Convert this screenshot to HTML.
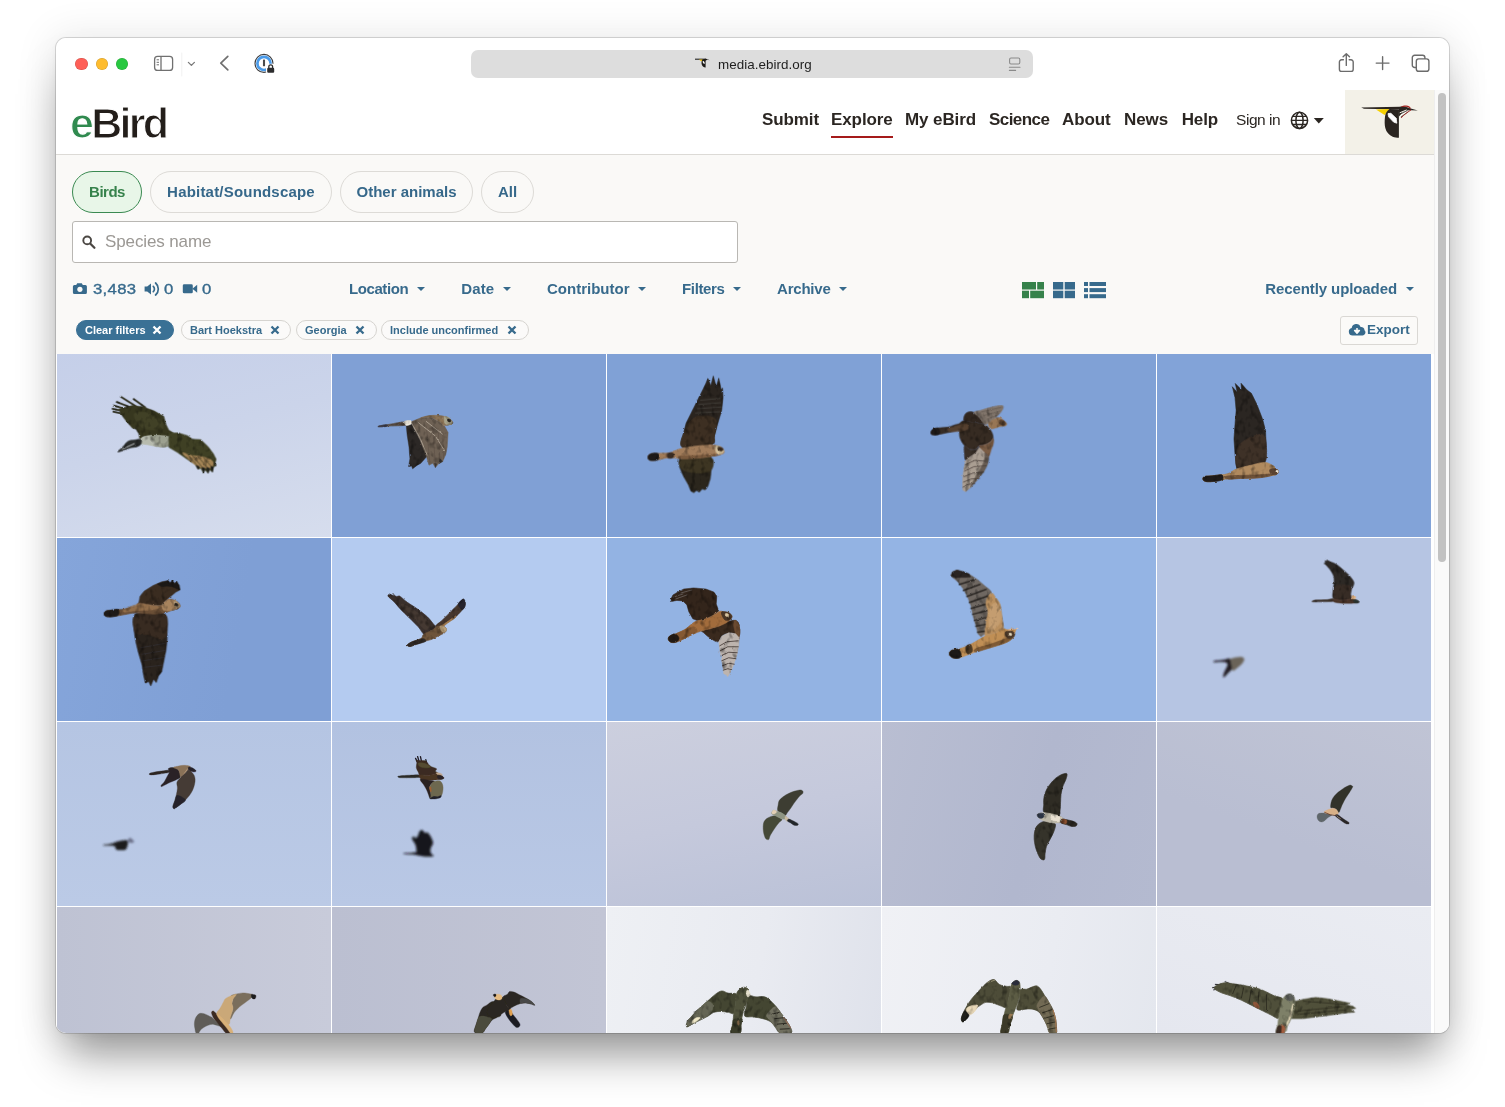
<!DOCTYPE html>
<html lang="en">
<head>
<meta charset="utf-8">
<title>Media Search - eBird</title>
<style>
*{box-sizing:border-box;margin:0;padding:0}
html,body{width:1505px;height:1107px;overflow:hidden;background:#fff}
body{font-family:"Liberation Sans",sans-serif;position:relative;color:#2b2622}
.win{position:absolute;left:56px;top:38px;width:1393px;height:995px;border-radius:10px;overflow:hidden;background:#fff;z-index:2}
.shadow{position:absolute;left:56px;top:38px;width:1393px;height:995px;border-radius:10px;z-index:1;
 box-shadow:0 0 0 1px rgba(0,0,0,.14),0 31px 42px -10px rgba(0,0,0,.40),0 0 38px 6px rgba(0,0,0,.075),0 2px 7px rgba(0,0,0,.035)}
.o{position:absolute;left:-56px;top:-38px;width:1505px;height:1107px}
.a{position:absolute}
.t{position:absolute;white-space:nowrap;line-height:1}
.o{will-change:transform;backface-visibility:hidden}
/* toolbar */
.tl{position:absolute;top:57.600px;width:12.600px;height:12.600px;border-radius:50%}
.url{position:absolute;left:471px;top:50px;width:562px;height:28px;border-radius:7px;background:#dddddd}
/* page */
.page{position:absolute;left:56px;top:90px;width:1378px;height:943px;background:#faf9f7}
.hdr{position:absolute;left:56px;top:90px;width:1378px;height:65px;background:#fff;border-bottom:1px solid #dcdad6}
.nav{font-weight:bold;font-size:17px;color:#2b2622;top:111px;letter-spacing:-.1px}
.pill{position:absolute;top:171px;height:42px;border-radius:21px;border:1px solid #dddbd7;background:#faf9f7;color:#36688a;font-weight:bold;font-size:15px;line-height:40px;text-align:center;white-space:nowrap}
.blue{color:#376a8c}
.dd{font-weight:bold;font-size:15px;color:#376a8c;top:281px}
.car{position:absolute;width:0;height:0;border-left:4.2px solid transparent;border-right:4.2px solid transparent;border-top:4.8px solid #376a8c;top:286.5px}
.chip{position:absolute;top:320px;height:20px;border-radius:10px;border:1px solid #d6d4d0;background:#fbfaf9;color:#376a8c;font-weight:bold;font-size:11px;line-height:18px;white-space:nowrap;padding-left:8px}
.chip svg{position:absolute;top:4.3px}
.cell{position:absolute;width:274px;overflow:hidden}
.cell svg{position:absolute;left:0;top:0;width:274px;height:184.05px;display:block}
</style>
</head>
<body>
<div class="shadow"></div>
<div class="win"><div class="o">

<!-- ===== Safari toolbar ===== -->
<div class="tl" style="left:75.400px;background:#fe5f57;box-shadow:inset 0 0 0 .5px rgba(0,0,0,.18)"></div>
<div class="tl" style="left:95.500px;background:#febc2e;box-shadow:inset 0 0 0 .5px rgba(0,0,0,.18)"></div>
<div class="tl" style="left:115.600px;background:#28c840;box-shadow:inset 0 0 0 .5px rgba(0,0,0,.18)"></div>
<svg class="a" style="left:150px;top:48px" width="140" height="32" viewBox="150 48 140 32" fill="none" stroke="#707070" stroke-width="1.3" stroke-linecap="round" stroke-linejoin="round">
 <rect x="154.6" y="56.4" width="18" height="14" rx="3"/>
 <path d="M161 56.6V70.2"/>
 <path d="M157 59.8h1.6M157 62.3h1.6M157 64.8h1.6" stroke-width="1"/>
 <path d="M181.8 53V76" stroke="#f1f1f1" stroke-width="1"/>
 <path d="M188.4 62.4l3 3 3-3" stroke="#7a7a7a" stroke-width="1.3"/>
 <path d="M227.8 56.4l-7 6.7 7 6.7" stroke-width="1.7"/>
 <circle cx="264" cy="63.4" r="9" stroke="#3c3c3e" stroke-width="1.1" fill="#fff"/>
 <circle cx="264" cy="63.4" r="6.6" stroke="#4a9bea" stroke-width="2.7"/>
 <path d="M264 59.6v6.6" stroke="#4a4a4c" stroke-width="2.1" stroke-linecap="butt"/>
 <rect x="266" y="63.8" width="9.5" height="10" rx="2" fill="#fff" stroke="none"/>
 <rect x="267.2" y="67.8" width="7" height="5" rx="1.1" fill="#2c2c2e" stroke="none"/>
 <path d="M268.8 68v-1.3a1.9 1.9 0 0 1 3.8 0V68" stroke="#2c2c2e" stroke-width="1.3"/>
</svg>
<div class="url"></div>
<svg class="a" style="left:694px;top:56px" width="18" height="16" viewBox="0 0 18 16">
 <path d="M1 3.2h11.2" stroke="#222" stroke-width="1.1"/>
 <path d="M5 3.6h3.6l-1.2 1.8z" fill="#f4c400"/>
 <path d="M8.6 3.4c-1.4 1.6-1.6 5.2.4 7 .9.8 2 1 2.6 1V4.8l1.6-1 2.6.4-2.4-.9c-.8-.7-2.6-.9-4.8.1z" fill="#1d1a17"/>
 <ellipse cx="9.7" cy="6.4" rx=".8" ry="1.6" transform="rotate(-28 9.7 6.4)" fill="#fff"/>
</svg>
<div class="t" style="left:718px;top:57.600px;font-size:13.4px;color:#1f1f1f;letter-spacing:.05px">media.ebird.org</div>
<svg class="a" style="left:1006px;top:55px" width="18" height="18" viewBox="1006 55 18 18" fill="none" stroke="#8a8a8a" stroke-width="1.1" stroke-linecap="round">
 <rect x="1009.6" y="58" width="10.2" height="6" rx="1.4"/>
 <path d="M1009.4 67.2h10.6M1009.4 70.4h6.2"/>
</svg>
<svg class="a" style="left:1330px;top:48px" width="110" height="30" viewBox="1330 48 110 30" fill="none" stroke="#6b6b6b" stroke-width="1.4" stroke-linecap="round" stroke-linejoin="round">
 <path d="M1343.4 59.8h-1.8a2.2 2.2 0 0 0-2.2 2.2v7.2a2.2 2.2 0 0 0 2.2 2.2h9.4a2.2 2.2 0 0 0 2.2-2.2V62a2.2 2.2 0 0 0-2.2-2.2h-1.8"/>
 <path d="M1346.3 65.4V54M1343.1 56.8l3.2-3.1 3.2 3.1"/>
 <path d="M1376.2 63.1h12.8M1382.6 56.7v12.8"/>
 <path d="M1415.6 67.5h-1a2.3 2.3 0 0 1-2.3-2.3v-7.6a2.3 2.3 0 0 1 2.3-2.3h8a2.3 2.3 0 0 1 2.3 2.3v.8"/>
 <rect x="1416.3" y="58.9" width="12.6" height="12.4" rx="2.4" fill="#fff"/>
</svg>

<!-- ===== page ===== -->
<div class="page"></div>
<div class="hdr"></div>

<!-- eBird logo -->
<div class="t" style="left:70px;top:102px;font-size:43px;font-weight:bold;letter-spacing:-2.7px;color:#231e1a;-webkit-text-stroke:1.1px #fff"><span style="color:#308a4f">e</span>Bird</div>

<!-- nav -->
<div class="t nav" style="left:762px">Submit</div>
<div class="t nav" style="left:831px">Explore</div>
<div class="a" style="left:831px;top:136px;width:62px;height:2px;background:#a51a1a"></div>
<div class="t nav" style="left:905px">My eBird</div>
<div class="t nav" style="left:989px;letter-spacing:-.55px">Science</div>
<div class="t nav" style="left:1062px">About</div>
<div class="t nav" style="left:1124px">News</div>
<div class="t nav" style="left:1181.7px">Help</div>
<div class="t" style="left:1236px;top:112px;font-size:15.5px;letter-spacing:-.45px;color:#2b2622">Sign in</div>
<svg class="a" style="left:1289px;top:110px" width="38" height="22" viewBox="1289 110 38 22" fill="none" stroke="#2b2622" stroke-width="1.5">
 <circle cx="1299.5" cy="120.4" r="8.1"/>
 <ellipse cx="1299.5" cy="120.4" rx="3.6" ry="8.1"/>
 <path d="M1291.4 120.4h16.2M1292.6 116.3h13.8M1292.6 124.5h13.8" stroke-width="1.3"/>
 <path d="M1313.8 117.9h10l-5 5.6z" fill="#2b2622" stroke="none"/>
</svg>

<!-- Cornell Lab logo -->
<div class="a" style="left:1345px;top:90px;width:89px;height:64px;background:#f3f1e8"></div>
<svg class="a" style="left:1355px;top:98px" width="70" height="46" viewBox="1355 98 70 46">
 <path d="M1361.200 107.400L1400 106.800 1404 106.200 1404 108.600 1400 109.100 1389.300 109.300 1364 108.700z" fill="#2a2520"/>
 <path d="M1376 109.400l13.600-.5-5 6z" fill="#f5d000"/>
 <path d="M1389.600 108.900c-2.700 1.600-4.200 4.300-4.600 7.800-.5 3.900-.5 8 .3 11.400 1 4.300 3.800 7.100 7.400 8.600 2 .8 4.200 1.100 6.200 1.100V110l.1-3.100 6-.3 5.800 1.800 7 2-6.800-.2-4.500.4-4 1.700-3.500 4.200L1398.900 109.200z" fill="#2a2520"/>
 <path d="M1400.800 107c1.500-1 3.500-1.500 5.400-1.400 2.200.1 3.900 1.200 4.900 2.800l-1.300.1c-.9-1-2.200-1.600-3.700-1.700z" fill="#a32420"/>
 <path d="M1399.700 112.800l7-2.900M1400.500 115.700l7.200-4.300" stroke="#fbf9f2" stroke-width="1" fill="none"/>
 <path d="M1400.100 114.200l7-3.500M1400.900 116.900l7.600-5.200" stroke="#2a2520" stroke-width=".7" fill="none"/>
 <path d="M1401.100 118c2.600-3 6-5.800 10.100-8.100" stroke="#a32420" stroke-width=".9" fill="none"/>
 <path d="M1388 113.600l2.900-.3 5.300 5 .600 4.900-3.200-1.100-5-5.300z" fill="#fff" stroke="#fff" stroke-width=".8" stroke-linejoin="round"/>
</svg>

<!-- pills -->
<div class="pill" style="left:72px;width:70px;background:#e8f6e8;border-color:#3b8a52;color:#36824b;letter-spacing:-.5px">Birds</div>
<div class="pill" style="left:150px;width:182px;letter-spacing:.2px">Habitat/Soundscape</div>
<div class="pill" style="left:340px;width:133px">Other animals</div>
<div class="pill" style="left:481px;width:53px">All</div>

<!-- search -->
<div class="a" style="left:72px;top:221px;width:665.5px;height:42px;background:#fff;border:1px solid #b9b7b3;border-radius:3px"></div>
<svg class="a" style="left:81px;top:234px" width="16" height="16" viewBox="0 0 16 16" fill="none" stroke="#4b4743" stroke-linecap="round">
 <circle cx="6.200" cy="6.400" r="3.900" stroke-width="1.900"/>
 <path d="M9.400 9.800l4 4" stroke-width="2.300"/>
</svg>
<div class="t" style="left:105px;top:233px;font-size:17px;color:#9b9894;letter-spacing:-.12px">Species name</div>

<!-- stats -->
<svg class="a" style="left:72px;top:282px" width="16" height="13" viewBox="0 0 16 13"><path d="M5.200 1.300h4.600l1 1.600h2.600a1.500 1.500 0 0 1 1.500 1.500v6a1.500 1.500 0 0 1-1.500 1.500H2.400A1.500 1.500 0 0 1 .9 10.400v-6a1.500 1.500 0 0 1 1.500-1.500h1.800z" fill="#376a8c"/><circle cx="7.900" cy="7.300" r="2.600" fill="#faf9f7"/></svg>
<div class="t blue" style="left:93px;top:281.800px;font-size:14.5px;letter-spacing:.3px;-webkit-text-stroke:.35px #376a8c;transform:scaleX(1.15);transform-origin:0 0">3,483</div>
<svg class="a" style="left:144px;top:281px" width="17" height="15" viewBox="0 0 17 15" fill="none" stroke="#376a8c" stroke-linecap="round"><path d="M.6 5.600h2.600L7 2.400v11.200L3.200 10.400H.6z" fill="#376a8c" stroke="none"/><path d="M9.300 5.300a3.800 3.800 0 0 1 0 5.400" stroke-width="1.700"/><path d="M11.600 2a8 8 0 0 1 0 12" stroke-width="1.700"/></svg>
<div class="t blue" style="left:163.800px;top:281.800px;font-size:14.5px;-webkit-text-stroke:.35px #376a8c;transform:scaleX(1.15);transform-origin:0 0">0</div>
<svg class="a" style="left:182px;top:283px" width="16" height="12" viewBox="0 0 16 12"><rect x=".8" y="1.300" width="10" height="9" rx="1.400" fill="#376a8c"/><path d="M10.400 5.800l4.800-4v8z" fill="#376a8c"/></svg>
<div class="t blue" style="left:201.800px;top:281.800px;font-size:14.5px;-webkit-text-stroke:.35px #376a8c;transform:scaleX(1.15);transform-origin:0 0">0</div>

<!-- dropdowns -->
<div class="t dd" style="left:349px;letter-spacing:-.42px">Location</div><div class="car" style="left:416.6px"></div>
<div class="t dd" style="left:461.3px;letter-spacing:.1px">Date</div><div class="car" style="left:503px"></div>
<div class="t dd" style="left:547px">Contributor</div><div class="car" style="left:637.8px"></div>
<div class="t dd" style="left:682px;letter-spacing:-.35px">Filters</div><div class="car" style="left:733px"></div>
<div class="t dd" style="left:777px;letter-spacing:-.2px">Archive</div><div class="car" style="left:839.2px"></div>
<div class="t dd" style="left:1265.3px;letter-spacing:-.1px">Recently uploaded</div><div class="car" style="left:1406px"></div>

<!-- view toggles -->
<svg class="a" style="left:1022px;top:282px" width="86" height="17" viewBox="0 0 86 17">
 <g fill="#36824b"><rect x="0" y="0" width="14" height="7.500"/><rect x="15.200" y="0" width="6.800" height="7.500"/><rect x="0" y="8.700" width="7" height="7.500"/><rect x="8.200" y="8.700" width="13.800" height="7.500"/></g>
 <g fill="#376a8c"><rect x="31" y="0" width="10.300" height="7.500"/><rect x="42.700" y="0" width="10.300" height="7.500"/><rect x="31" y="8.700" width="10.300" height="7.500"/><rect x="42.700" y="8.700" width="10.300" height="7.500"/>
 <rect x="62" y="0" width="4" height="4"/><rect x="67.500" y="0" width="16.500" height="4"/><rect x="62" y="6.100" width="4" height="4"/><rect x="67.500" y="6.100" width="16.500" height="4"/><rect x="62" y="12.200" width="4" height="4"/><rect x="67.500" y="12.200" width="16.500" height="4"/></g>
</svg>

<!-- chips -->
<div class="chip" style="left:76px;width:98px;background:#3a7195;border-color:#3a7195;color:#fff;padding-left:8px">Clear filters<svg style="left:75px" width="10" height="10" viewBox="0 0 10 10"><path d="M1.500 1.500l7 7M8.500 1.500l-7 7" stroke="#fff" stroke-width="2.300"/></svg></div>
<div class="chip" style="left:181px;width:110px">Bart Hoekstra<svg style="left:88px" width="10" height="10" viewBox="0 0 10 10"><path d="M1.500 1.500l7 7M8.500 1.500l-7 7" stroke="#376a8c" stroke-width="2.300"/></svg></div>
<div class="chip" style="left:296px;width:81px">Georgia<svg style="left:58px" width="10" height="10" viewBox="0 0 10 10"><path d="M1.500 1.500l7 7M8.500 1.500l-7 7" stroke="#376a8c" stroke-width="2.300"/></svg></div>
<div class="chip" style="left:381px;width:148px">Include unconfirmed<svg style="left:125px" width="10" height="10" viewBox="0 0 10 10"><path d="M1.500 1.500l7 7M8.500 1.500l-7 7" stroke="#376a8c" stroke-width="2.300"/></svg></div>

<!-- export -->
<div class="a" style="left:1340px;top:316px;width:78px;height:29px;border:1px solid #dad8d4;border-radius:3px;background:#fbfaf8"></div>
<svg class="a" style="left:1348px;top:323px" width="18" height="14" viewBox="0 0 18 14"><path d="M4.600 12.400a3.700 3.700 0 0 1-.9-7.300A4.600 4.600 0 0 1 12.600 4a3.300 3.300 0 0 1 3.900 3.300 3 3 0 0 1-2.600 5.100z" fill="#376a8c"/><path d="M9 5v4.200M6.600 7.600L9 10.200l2.400-2.600z" stroke="#fbfaf8" stroke-width="1.500" fill="#fbfaf8" stroke-linejoin="round"/></svg>
<div class="t blue" style="left:1367px;top:323px;font-size:13.5px;font-weight:bold">Export</div>

<!-- ===== grid ===== -->
<div class="a" style="left:56px;top:354px;width:1378px;height:680px;background:#fff"></div>
<svg width="0" height="0" style="position:absolute"><defs><filter id="b1" x="-10%" y="-10%" width="120%" height="120%" color-interpolation-filters="sRGB"><feTurbulence type="fractalNoise" baseFrequency="0.05" numOctaves="2" seed="4" result="n"/><feDisplacementMap in="SourceGraphic" in2="n" scale="11" xChannelSelector="R" yChannelSelector="G" result="d"/><feTurbulence type="fractalNoise" baseFrequency="0.035 0.025" numOctaves="2" seed="9" result="m"/><feColorMatrix in="m" type="matrix" values="0 0 0 0 0  0 0 0 0 0  0 0 0 0 0  0 0 0 -1.1 0.56" result="ma"/><feComposite in="ma" in2="d" operator="in" result="sp"/><feMerge result="mm"><feMergeNode in="d"/><feMergeNode in="sp"/></feMerge><feGaussianBlur in="mm" stdDeviation="2"/></filter><filter id="b2" x="-20%" y="-20%" width="140%" height="140%"><feGaussianBlur stdDeviation="2.6"/></filter><filter id="b3" x="-30%" y="-30%" width="160%" height="160%"><feGaussianBlur stdDeviation="6"/></filter></defs></svg>
<div class="cell" style="left:57px;top:354px;height:183px;background:linear-gradient(165deg,#c5cfe9 0%,#cbd4ea 45%,#d6dded 100%)"><svg viewBox="0 0 1505 1011" preserveAspectRatio="none"><g stroke-linejoin="round"><g filter="url(#b1)"><g transform="translate(214.2,197.7) scale(0.5000)"><path fill="none" stroke="#2f2f1f" stroke-width="20" stroke-linecap="round" d="M470,200L275,75M540,190L415,100M430,210L228,132M400,230L192,170M380,250L182,206M360,275L192,238" /><path fill="#37371f" stroke="#37371f" stroke-width="5" d="M250,210L400,170L520,185L640,230L745,290L770,380L800,440L850,470L780,520L640,500L520,510L480,540L470,480L440,430L400,420L330,340L280,270Z" /><path fill="#46462a" stroke="#46462a" stroke-width="7" d="M420,260C438,243 513,240 560,250C607,260 670,292 700,320C730,348 750,400 740,420C730,440 677,440 640,440C603,440 552,435 520,420C488,405 467,377 450,350C433,323 402,277 420,260Z" opacity=".7"/><path fill="#b7bbae" stroke="#b7bbae" stroke-width="7" d="M480,545C492,531 523,512 560,505C597,498 660,498 700,500C740,502 783,502 800,520C817,538 817,592 800,610C783,628 740,627 700,625C660,623 595,606 560,600C525,594 503,599 490,590C477,581 468,559 480,545Z" /><path fill="#8b8f7c" stroke="#8b8f7c" stroke-width="7" d="M600,505C627,498 767,502 800,520C833,538 817,592 800,610C783,628 727,633 700,625C673,617 657,580 640,560C623,540 573,512 600,505Z" opacity=".6"/><path fill="#2b2d2c" stroke="#2b2d2c" stroke-width="7" d="M495,545C483,537 444,547 420,550C396,553 370,553 350,565C330,577 318,601 300,620C282,639 240,670 240,678C240,686 277,672 300,665C323,658 357,642 380,635C403,628 422,631 440,625C458,619 481,613 490,600C499,587 507,553 495,545Z" /><path fill="none" stroke="#c8cccc" stroke-width="10" stroke-linecap="round" d="M290,650L420,590" /><path fill="#3f4024" stroke="#3f4024" stroke-width="5" d="M800,470L900,470L1000,500L1060,540L1150,545L1230,620L1290,700L1320,760L1310,800L1320,830L1290,850L1280,900L1250,880L1230,915L1200,880L1180,910L1150,860L1120,870L1090,820L1000,760L900,690L800,630Z" /><path fill="#b58f5e" stroke="#b58f5e" stroke-width="7" d="M950,690C952,680 1017,713 1050,720C1083,727 1117,723 1150,730C1183,737 1227,748 1250,760C1273,772 1287,785 1290,800C1293,815 1285,840 1270,850C1255,860 1225,862 1200,860C1175,858 1147,853 1120,840C1093,827 1068,805 1040,780C1012,755 948,700 950,690Z" opacity=".85"/><path fill="none" stroke="#4a4428" stroke-width="8" stroke-linecap="round" d="M1000,700L1110,830M1060,720L1175,860M1120,730L1230,860M1180,740L1275,850" /><path fill="#1e1e1c" stroke="#1e1e1c" stroke-width="5" d="M1100,830L1135,840L1120,872ZM1165,850L1195,860L1180,912ZM1215,850L1245,860L1232,915ZM1260,840L1288,850L1280,902ZM1295,800L1320,815L1318,835Z" /></g></g></g></svg></div>
<div class="cell" style="left:332px;top:354px;height:183px;background:#80a0d5"><svg viewBox="0 0 1505 1011" preserveAspectRatio="none"><g stroke-linejoin="round"><g filter="url(#b1)"><g transform="translate(87.9,230.7) scale(0.5000)"><path fill="#2c2826" stroke="#2c2826" stroke-width="5" d="M640,330L700,310L790,480L850,600L870,660L800,740L760,760L710,800L700,770L665,775L680,690L670,560L650,430Z" /><path fill="#5a4d42" stroke="#5a4d42" stroke-width="7" d="M340,330C359,325 413,318 460,310C507,302 590,283 620,285C650,287 667,312 640,320C613,328 509,327 460,330C411,333 365,338 345,338C325,338 321,335 340,330Z" /><path fill="#3a3a48" stroke="#3a3a48" stroke-width="7" d="M340,330C352,326 406,315 420,316C434,317 438,330 425,334C412,338 359,339 345,338C331,337 328,334 340,330Z" /><path fill="#efe9dc" stroke="#efe9dc" stroke-width="7" d="M620,280C628,272 678,268 690,272C702,276 703,297 695,305C687,313 652,326 640,322C628,318 612,288 620,280Z" /><path fill="#6e6154" stroke="#6e6154" stroke-width="5" d="M700,280L800,240L900,230L1000,280L1060,330L1100,400L1090,560L1075,640L1040,720L1000,740L960,785L930,740L890,760L860,660L790,480L700,310Z" /><path fill="#8b7356" stroke="#8b7356" stroke-width="7" d="M800,240C800,237 867,219 900,215C933,211 970,212 1000,215C1030,218 1058,222 1080,230C1102,238 1118,248 1130,260C1142,272 1155,290 1150,300C1145,310 1117,317 1100,320C1083,323 1067,327 1050,320C1033,313 1025,295 1000,280C975,265 933,239 900,232C867,225 800,243 800,240Z" /><path fill="#a9a48c" stroke="#a9a48c" stroke-width="7" d="M1060,228C1068,218 1096,230 1110,240C1124,250 1146,278 1145,290C1144,302 1118,313 1105,315C1092,317 1072,314 1065,300C1058,286 1052,238 1060,228Z" /><path fill="#2a2622" stroke="#2a2622" stroke-width="7" d="M1095,255C1099,251 1120,254 1125,258C1130,262 1132,276 1128,280C1124,284 1106,284 1100,280C1094,276 1091,259 1095,255Z" /><path fill="none" stroke="#5a4e44" stroke-width="6" stroke-linecap="round" d="M860,330L900,740M930,340L960,760M990,360L1010,720M1040,400L1050,690" /><path fill="none" stroke="#c9bfae" stroke-width="7" stroke-linecap="round" d="M700,300L790,460L870,650M770,290L960,440L1060,600M860,280L1040,420" /><path fill="#3a3634" stroke="#3a3634" stroke-width="5" d="M1010,690L1040,720L1000,742ZM950,740L975,745L960,786Z" /></g></g></g></svg></div>
<div class="cell" style="left:607px;top:354px;height:183px;background:#80a1d6"><svg viewBox="0 0 1505 1011" preserveAspectRatio="none"><g stroke-linejoin="round"><g filter="url(#b1)"><g transform="translate(115.4,87.9) scale(0.6642)"><path fill="#2a241f" stroke="#2a241f" stroke-width="5" d="M450,640L455,540L480,440L540,320L600,200L640,120L660,70L685,130L705,50L730,140L750,68L770,160L782,150L785,230L775,330L740,450L715,540L690,620L560,630Z" /><path fill="#3d2f22" stroke="#3d2f22" stroke-width="7" d="M450,640C413,620 455,540 470,500C485,460 510,420 540,400C570,380 618,377 650,380C682,383 719,393 730,420C741,447 722,507 715,540C708,573 734,603 690,620C646,637 487,660 450,640Z" /><path fill="none" stroke="#55534f" stroke-width="9" stroke-linecap="round" d="M600,250L760,235M585,285L765,270M570,320L770,305M560,355L760,345" opacity=".55"/><path fill="#2b261d" stroke="#2b261d" stroke-width="5" d="M425,735L560,728L685,715L690,800L680,900L660,960L640,990L610,985L590,1010L565,995L545,1015L520,1000L500,950L460,880L425,800Z" /><path fill="#3d3522" stroke="#3d3522" stroke-width="7" d="M440,740C478,724 639,707 680,722C721,737 705,809 685,830C665,851 599,852 560,850C521,848 470,838 450,820C430,802 402,756 440,740Z" /><path fill="#a17c5a" stroke="#a17c5a" stroke-width="7" d="M440,650C475,641 518,635 560,630C602,625 662,621 690,620C718,619 716,622 730,625C744,628 764,631 775,640C786,649 798,670 795,680C792,690 778,695 760,700C742,705 723,707 690,712C657,717 603,725 560,728C517,731 468,730 430,730C392,730 363,722 330,725C297,728 255,742 230,745C205,748 191,749 180,745C169,741 164,728 165,720C166,712 169,700 185,695C201,690 232,692 260,690C288,688 320,692 350,685C380,678 405,659 440,650Z" /><path fill="#7a5a3e" stroke="#7a5a3e" stroke-width="7" d="M430,712C452,708 517,710 560,708C603,706 657,701 690,700C723,699 760,698 760,700C760,702 723,709 690,714C657,719 603,727 560,730C517,733 452,735 430,732C408,729 408,716 430,712Z" /><path fill="#3a2c22" stroke="#3a2c22" stroke-width="7" d="M330,690C337,684 365,682 372,688C379,694 379,718 372,724C365,730 337,732 330,726C323,720 323,696 330,690Z" /><path fill="#1e1a18" stroke="#1e1a18" stroke-width="7" d="M165,720C166,712 171,700 185,695C199,690 240,684 250,692C260,700 257,733 245,742C233,751 193,750 180,746C167,742 164,728 165,720Z" /><path fill="#d3c09c" stroke="#d3c09c" stroke-width="7" d="M722,632C727,624 751,630 762,636C773,642 790,660 790,670C790,680 773,693 764,696C755,699 741,697 734,686C727,675 717,640 722,632Z" /><path fill="#3a2c20" stroke="#3a2c20" stroke-width="7" d="M745,640C750,637 774,641 780,645C786,649 787,663 782,666C777,669 756,668 750,664C744,660 740,643 745,640Z" /></g></g></g></svg></div>
<div class="cell" style="left:882px;top:354px;height:183px;background:#80a1d6"><svg viewBox="0 0 1505 1011" preserveAspectRatio="none"><g stroke-linejoin="round"><g filter="url(#b1)"><g transform="translate(164.8,263.7) scale(0.5000)"><path fill="#362c25" stroke="#362c25" stroke-width="7" d="M210,330C212,320 217,308 230,300C243,292 262,289 290,285C318,281 362,282 400,275C438,268 493,239 520,240C547,241 560,268 560,280C560,292 547,301 520,310C493,319 440,327 400,335C360,343 310,354 280,358C250,362 232,363 220,358C208,353 208,340 210,330Z" /><path fill="#1f1b19" stroke="#1f1b19" stroke-width="7" d="M210,330C212,320 217,307 230,300C243,293 278,278 290,287C302,296 312,340 300,352C288,364 235,362 220,358C205,354 208,340 210,330Z" /><path fill="#362b22" stroke="#362b22" stroke-width="7" d="M520,240C530,220 563,204 580,200C597,196 600,211 620,215C640,219 670,219 700,225C730,231 775,239 800,250C825,261 837,275 850,290C863,305 873,322 880,340C887,358 893,383 890,400C887,417 875,428 860,440C845,452 820,463 800,470C780,477 757,472 740,480C723,488 717,513 700,520C683,527 660,527 640,520C620,513 598,500 580,480C562,460 540,427 530,400C520,373 522,347 520,320C518,293 510,260 520,240Z" /><path fill="#6b4f38" stroke="#6b4f38" stroke-width="7" d="M400,290C417,278 487,263 520,255C553,247 583,234 600,240C617,246 630,277 620,290C610,303 573,314 540,320C507,326 443,330 420,325C397,320 383,302 400,290Z" opacity=".6"/><path fill="#30261f" stroke="#30261f" stroke-width="7" d="M570,200C563,188 572,155 580,140C588,125 603,114 620,110C637,106 660,105 680,115C700,125 722,149 740,170C758,191 797,231 790,240C783,249 728,229 700,225C672,221 642,219 620,215C598,211 577,212 570,200Z" /><path fill="#81756b" stroke="#81756b" stroke-width="7" d="M680,115C683,102 730,99 760,90C790,81 827,68 860,60C893,52 937,42 960,40C983,38 995,37 1000,45C1005,53 998,74 990,90C982,106 965,124 950,140C935,156 918,170 900,185C882,200 857,220 840,230C823,240 817,255 800,245C783,235 760,192 740,170C720,148 677,128 680,115Z" /><path fill="none" stroke="#5f554d" stroke-width="7" stroke-linecap="round" d="M760,110L980,60M790,150L970,100M820,190L930,150" /><path fill="#987654" stroke="#987654" stroke-width="7" d="M840,235C847,218 882,201 900,190C918,179 933,169 950,170C967,171 985,183 1000,195C1015,207 1037,229 1040,240C1043,251 1033,257 1020,262C1007,267 980,265 960,270C940,275 917,287 900,290C883,293 870,299 860,290C850,281 833,252 840,235Z" /><path fill="#5e4632" stroke="#5e4632" stroke-width="7" d="M960,200C967,193 993,198 1005,205C1017,212 1031,232 1030,240C1029,248 1011,254 1000,255C989,256 972,254 965,245C958,236 953,207 960,200Z" /><path fill="#7a5c44" stroke="#7a5c44" stroke-width="7" d="M740,480C747,472 780,477 800,470C820,463 845,452 860,440C875,428 884,398 890,400C896,402 898,430 895,450C892,470 879,495 870,520C861,545 852,593 840,600C828,607 813,573 800,560C787,547 770,533 760,520C750,507 733,488 740,480Z" /><path fill="#3a3029" stroke="#3a3029" stroke-width="7" d="M580,480C591,473 620,513 640,520C660,527 683,525 700,520C717,515 740,483 740,490C740,497 717,542 700,560C683,578 658,587 640,600C622,613 601,647 590,640C579,633 577,587 575,560C573,533 569,487 580,480Z" /><path fill="#aa9e92" stroke="#aa9e92" stroke-width="5" d="M590,640L640,600L700,560L740,500L800,560L840,600L830,680L790,760L720,850L640,940L590,985L560,970L555,900L560,800L575,700Z" /><path fill="none" stroke="#4e443e" stroke-width="9" stroke-linecap="round" d="M585,690L690,640L800,650M575,760L680,710L815,700M570,820L670,780L790,770M565,880L650,845L740,840M560,935L620,905L690,895" /><path fill="#4a4038" stroke="#4a4038" stroke-width="7" d="M800,560C807,557 835,580 840,600C845,620 838,653 830,680C822,707 808,732 790,760C772,788 745,820 720,850C695,880 643,945 640,940C637,935 678,860 700,820C722,780 753,733 770,700C787,667 795,643 800,620C805,597 793,563 800,560Z" opacity=".7"/></g></g></g></svg></div>
<div class="cell" style="left:1157px;top:354px;height:183px;background:#82a3d8"><svg viewBox="0 0 1505 1011" preserveAspectRatio="none"><g stroke-linejoin="round"><g filter="url(#b1)"><g transform="translate(159.3,131.8) scale(0.5985)"><path fill="#2b2622" stroke="#2b2622" stroke-width="5" d="M465,830L450,700L440,560L450,420L460,300L450,180L425,80L470,130L452,50L510,110L505,48L560,110L600,140L650,240L700,370L730,480L735,600L730,700L720,780L600,800Z" /><path fill="#3e3127" stroke="#3e3127" stroke-width="7" d="M470,820C448,795 455,693 470,650C485,607 522,582 560,560C598,538 671,513 700,520C729,527 731,558 735,600C739,642 748,737 725,770C702,803 642,792 600,800C558,808 492,845 470,820Z" /><path fill="#b08a5f" stroke="#b08a5f" stroke-width="7" d="M465,835C502,822 558,810 600,800C642,790 688,775 720,775C752,775 772,791 790,800C808,809 820,820 830,830C840,840 848,851 848,860C848,869 845,878 830,885C815,892 790,895 760,900C730,905 693,912 650,915C607,918 545,918 500,920C455,922 422,920 380,925C338,930 283,946 250,950C217,954 196,953 180,950C164,947 157,938 155,930C153,922 152,911 170,905C188,899 225,899 260,895C295,891 346,890 380,880C414,870 428,848 465,835Z" /><path fill="#6e5238" stroke="#6e5238" stroke-width="7" d="M380,900C425,894 580,893 650,890C720,887 782,878 800,880C818,882 785,896 760,902C735,908 693,915 650,918C607,921 545,920 500,922C455,924 400,932 380,928C360,924 335,906 380,900Z" /><path fill="#1f1b19" stroke="#1f1b19" stroke-width="7" d="M155,930C153,922 156,910 170,905C184,900 213,900 240,898C267,896 315,884 330,890C345,896 343,925 330,935C317,945 275,948 250,950C225,952 196,953 180,950C164,947 157,938 155,930Z" /><path fill="#5a4230" stroke="#5a4230" stroke-width="7" d="M770,840C778,832 818,831 830,835C842,839 846,856 845,865C844,874 836,886 825,888C814,890 789,888 780,880C771,872 762,848 770,840Z" /><path fill="#e8e0d0" stroke="#e8e0d0" stroke-width="7" d="M828,848C831,846 842,849 844,852C846,855 845,866 842,868C839,870 830,869 828,866C826,863 825,850 828,848Z" /></g></g></g></svg></div>
<div class="cell" style="left:57px;top:538px;height:183px;background:linear-gradient(100deg,#85a5da,#7f9fd5 65%)"><svg viewBox="0 0 1505 1011" preserveAspectRatio="none"><g stroke-linejoin="round"><g filter="url(#b1)"><g transform="translate(192.3,219.7) scale(0.5985)"><path fill="#3a2c20" stroke="#3a2c20" stroke-width="5" d="M430,230L440,170L480,120L560,70L640,35L700,25L720,50L735,22L760,55L775,30L800,70L805,110L770,130L720,170L680,205L640,250L560,250Z" /><path fill="#1b1816" stroke="#1b1816" stroke-width="5" d="M600,55L700,25L720,50L735,22L760,55L775,30L800,70L805,110L780,100L740,80L690,75L640,80Z" /><path fill="#2a231d" stroke="#2a231d" stroke-width="5" d="M395,330L560,330L665,320L690,420L690,560L680,660L660,760L640,860L610,900L590,960L565,930L540,990L520,950L490,965L475,900L460,800L430,700L405,600L385,480Z" /><path fill="#382b21" stroke="#382b21" stroke-width="7" d="M400,335C443,306 612,301 660,325C708,349 690,441 688,480C686,519 678,553 650,560C622,567 562,530 520,520C478,510 420,531 400,500C380,469 357,364 400,335Z" /><path fill="none" stroke="#3a3a44" stroke-width="9" stroke-linecap="round" d="M450,640L670,600M460,700L672,665M470,760L660,730M480,820L645,800" opacity=".5"/><path fill="#6b4f36" stroke="#6b4f36" stroke-width="7" d="M400,260C422,251 403,232 430,230C457,228 525,247 560,250C595,253 618,258 640,250C662,242 673,208 690,200C707,192 723,196 740,200C757,204 779,215 790,225C801,235 810,250 808,260C806,270 795,278 780,285C765,292 740,294 720,300C700,306 687,315 660,320C633,325 603,330 560,330C517,330 443,319 400,320C357,321 333,330 300,335C267,340 227,349 200,352C173,355 155,358 140,355C125,352 114,343 112,335C110,327 114,312 125,305C136,298 151,298 180,295C209,292 263,291 300,285C337,279 378,269 400,260Z" /><path fill="#9c7650" stroke="#9c7650" stroke-width="7" d="M300,288C322,276 387,246 430,240C473,234 525,252 560,255C595,258 640,250 640,256C640,262 600,283 560,290C520,297 443,294 400,298C357,302 317,314 300,312C283,310 278,300 300,288Z" opacity=".8"/><path fill="#1e1a17" stroke="#1e1a17" stroke-width="7" d="M112,335C110,327 114,312 125,305C136,298 161,298 180,295C199,292 231,282 240,290C249,298 252,334 235,345C218,356 160,357 140,355C120,353 114,343 112,335Z" /><path fill="#a8845e" stroke="#a8845e" stroke-width="7" d="M650,240C658,225 683,206 700,200C717,194 735,200 750,205C765,210 781,218 790,228C799,238 809,253 806,262C803,271 788,276 770,282C752,288 720,299 700,300C680,301 658,300 650,290C642,280 642,255 650,240Z" /><path fill="#cbb795" stroke="#cbb795" stroke-width="7" d="M758,222C763,219 781,228 788,234C795,240 800,254 798,260C796,266 784,270 778,268C772,266 763,258 760,250C757,242 753,225 758,222Z" /><path fill="#2a221c" stroke="#2a221c" stroke-width="7" d="M760,232C764,229 782,234 786,238C790,242 790,253 786,256C782,259 766,258 762,254C758,250 756,235 760,232Z" /></g></g></g></svg></div>
<div class="cell" style="left:332px;top:538px;height:183px;background:#b4cbf0"><svg viewBox="0 0 1505 1011" preserveAspectRatio="none"><g stroke-linejoin="round"><g filter="url(#b1)"><g transform="translate(153.8,203.2) scale(0.5000)"><path fill="none" stroke="#3a302c" stroke-width="9" stroke-linecap="round" d="M370,270L312,235M380,260L330,208M400,250L362,202" /><path fill="#3a302c" stroke="#3a302c" stroke-width="7" d="M310,235C302,222 310,215 325,215C340,215 381,232 400,235C419,238 420,224 440,235C460,246 487,276 520,300C553,324 603,353 640,380C677,407 713,435 740,460C767,485 785,511 800,530C815,549 832,562 830,575C828,588 805,599 790,610C775,621 755,633 740,640C725,647 717,662 700,650C683,638 667,600 640,570C613,540 573,503 540,470C507,437 468,400 440,370C412,340 392,312 370,290C348,268 318,248 310,235Z" /><path fill="#4a3e35" stroke="#4a3e35" stroke-width="7" d="M460,320C467,310 590,385 640,420C690,455 747,500 760,530C773,560 747,608 720,600C693,592 643,527 600,480C557,433 453,330 460,320Z" opacity=".7"/><path fill="#46372e" stroke="#46372e" stroke-width="7" d="M830,560C833,547 875,523 900,500C925,477 953,447 980,420C1007,393 1038,362 1060,340C1082,318 1098,298 1110,285C1122,272 1128,262 1135,265C1142,268 1152,286 1155,300C1158,314 1158,333 1150,350C1142,367 1127,382 1110,400C1093,418 1072,442 1050,460C1028,478 1002,495 980,510C958,525 937,538 920,550C903,562 895,578 880,580C865,582 827,573 830,560Z" /><path fill="#24222c" stroke="#24222c" stroke-width="7" d="M1080,320C1082,301 1122,268 1135,265C1148,262 1152,286 1155,300C1158,314 1156,337 1150,350C1144,363 1132,385 1120,380C1108,375 1078,339 1080,320Z" /><path fill="#a07a50" stroke="#a07a50" stroke-width="7" d="M880,570C895,556 952,520 980,500C1008,480 1040,454 1050,450C1060,446 1055,462 1040,475C1025,488 985,512 960,530C935,548 903,578 890,585C877,592 865,584 880,570Z" /><path fill="#6e543a" stroke="#6e543a" stroke-width="7" d="M700,650C718,637 768,622 790,610C812,598 815,583 830,575C845,567 863,561 880,560C897,559 918,563 930,570C942,577 950,589 950,600C950,611 945,623 930,635C915,647 885,658 860,670C835,682 807,700 780,710C753,720 727,722 700,730C673,738 645,751 620,760C595,769 567,783 550,785C533,787 518,778 520,770C522,762 540,750 560,740C580,730 620,718 640,710C660,702 670,700 680,690C690,680 682,663 700,650Z" /><path fill="#b7a07c" stroke="#b7a07c" stroke-width="7" d="M880,562C887,556 918,565 930,572C942,579 951,592 950,602C949,612 935,629 925,630C915,631 898,621 890,610C882,599 873,568 880,562Z" /><path fill="#2e2824" stroke="#2e2824" stroke-width="7" d="M520,770C522,762 540,750 560,740C580,730 617,719 640,712C663,705 687,697 700,700C713,703 733,720 720,730C707,740 648,753 620,762C592,771 567,785 550,786C533,787 518,778 520,770Z" /></g></g></g></svg></div>
<div class="cell" style="left:607px;top:538px;height:183px;background:#93b3e3"><svg viewBox="0 0 1505 1011" preserveAspectRatio="none"><g stroke-linejoin="round"><g filter="url(#b1)"><g transform="translate(236.2,241.7) scale(0.5474)"><path fill="#33251b" stroke="#33251b" stroke-width="5" d="M210,170L230,130L280,100L340,70L440,60L560,70L640,100L670,140L665,220L690,290L640,330L560,370L480,390L430,370L390,300L370,230L330,190L270,185L215,195Z" /><path fill="none" stroke="#6a625e" stroke-width="8" stroke-linecap="round" d="M240,150L330,120M260,170L370,130M310,110L420,80" /><path fill="#3a2a1e" stroke="#3a2a1e" stroke-width="7" d="M520,490C530,483 570,478 600,470C630,462 670,452 700,440C730,428 755,409 780,400C805,391 832,383 850,385C868,387 877,396 885,410C893,424 898,448 900,470C902,492 902,532 895,540C888,548 878,525 860,520C842,515 813,507 790,510C767,513 738,525 720,540C702,555 700,597 680,600C660,603 623,575 600,560C577,545 553,522 540,510C527,498 510,497 520,490Z" /><path fill="#6a4a30" stroke="#6a4a30" stroke-width="7" d="M850,385C858,380 877,396 885,410C893,424 898,445 900,470C902,495 898,538 895,560C892,582 886,607 880,600C874,593 867,547 860,520C853,493 842,462 840,440C838,418 842,390 850,385Z" /><path fill="#bdb4ae" stroke="#bdb4ae" stroke-width="5" d="M690,600L720,545L790,510L860,520L895,560L890,640L870,740L840,830L810,900L780,950L765,930L740,920L730,850L715,760L700,680Z" /><path fill="none" stroke="#3f3430" stroke-width="8" stroke-linecap="round" d="M700,640L770,600L885,590M705,690L780,650L885,650M712,740L790,705L875,710M720,790L790,760L862,770M728,840L790,815L845,825M735,885L780,870L820,880" /><path fill="#a26c3c" stroke="#a26c3c" stroke-width="7" d="M450,400C483,383 528,382 560,370C592,358 617,342 640,330C663,318 683,300 700,295C717,290 725,298 740,300C755,302 777,303 790,310C803,317 817,330 820,340C823,350 817,360 810,370C803,380 798,388 780,400C762,412 730,428 700,440C670,452 630,462 600,470C570,478 547,482 520,490C493,498 470,507 440,520C410,533 370,556 340,570C310,584 282,599 260,605C238,611 222,609 210,605C198,601 188,590 185,580C182,570 182,555 195,545C208,535 232,532 260,520C288,508 328,490 360,470C392,450 417,417 450,400Z" /><path fill="#7a5230" stroke="#7a5230" stroke-width="7" d="M250,530C262,512 328,493 360,480C392,467 422,447 440,450C458,453 480,484 470,500C460,516 410,530 380,545C350,560 312,592 290,590C268,588 238,548 250,530Z" opacity=".7"/><path fill="#221a14" stroke="#221a14" stroke-width="7" d="M185,580C182,570 184,555 195,545C206,535 234,520 250,522C266,524 287,547 290,560C293,573 282,592 270,600C258,608 229,609 215,606C201,603 188,590 185,580Z" /><path fill="#4a3626" stroke="#4a3626" stroke-width="7" d="M720,300C730,293 773,301 790,308C807,315 819,331 822,342C825,353 818,365 808,372C798,379 773,389 760,385C747,381 737,364 730,350C723,336 710,307 720,300Z" /><path fill="#d8c4a0" stroke="#d8c4a0" stroke-width="7" d="M758,318C762,315 779,318 784,322C789,326 790,341 786,344C782,347 765,346 760,342C755,338 754,321 758,318Z" /></g></g></g></svg></div>
<div class="cell" style="left:882px;top:538px;height:183px;background:#94b4e4"><svg viewBox="0 0 1505 1011" preserveAspectRatio="none"><g stroke-linejoin="round"><g filter="url(#b1)"><g transform="translate(296.6,142.8) scale(0.5474)"><path fill="#6f6862" stroke="#6f6862" stroke-width="5" d="M150,120L165,80L210,60L260,75L330,100L420,160L490,220L540,260L560,290L520,330L500,400L520,470L510,540L500,620L490,700L450,730L420,700L400,620L370,520L350,420L320,340L280,260L220,180Z" /><path fill="#2a2523" stroke="#2a2523" stroke-width="5" d="M150,120L165,80L210,60L260,75L330,100L350,130L300,135L250,135L195,140Z" /><path fill="none" stroke="#2e2a27" stroke-width="15" stroke-linecap="round" d="M235,205L380,160M275,265L440,205M310,325L500,255M335,385L520,320M352,445L505,400M368,505L515,465M385,565L510,535M400,625L500,605M418,685L492,675" /><path fill="#b98f5e" stroke="#b98f5e" stroke-width="7" d="M560,290C573,292 587,322 600,340C613,358 631,377 640,400C649,423 651,453 655,480C659,507 662,532 665,560C668,588 683,628 672,650C661,672 629,678 600,690C571,702 518,718 500,720C482,722 490,717 490,700C490,683 497,647 500,620C503,593 507,565 510,540C513,515 522,493 520,470C518,447 500,423 500,400C500,377 510,348 520,330C530,312 547,288 560,290Z" /><path fill="#c9a478" stroke="#c9a478" stroke-width="7" d="M570,400C587,387 617,393 630,420C643,447 655,523 650,560C645,597 618,623 600,640C582,657 552,683 540,660C528,637 525,543 530,500C535,457 553,413 570,400Z" opacity=".7"/><path fill="#c08f55" stroke="#c08f55" stroke-width="7" d="M430,760C458,744 472,732 500,720C528,708 571,702 600,690C629,678 652,655 672,650C692,645 700,660 720,660C740,660 776,652 790,650C804,648 805,641 805,648C805,655 795,676 790,690C785,704 787,720 775,735C763,750 742,768 720,780C698,792 667,801 640,810C613,819 587,828 560,835C533,842 507,848 480,855C453,862 427,871 400,880C373,889 347,900 320,910C293,920 263,934 240,940C217,946 197,948 180,945C163,942 148,929 140,920C132,911 132,899 135,890C138,881 142,872 160,865C178,858 212,858 240,850C268,842 298,830 330,815C362,800 402,776 430,760Z" /><path fill="#7e5a34" stroke="#7e5a34" stroke-width="7" d="M400,850C427,836 510,817 560,800C610,783 664,761 700,750C736,739 772,730 775,735C778,740 742,768 720,780C698,792 667,801 640,810C613,819 600,823 560,835C520,847 427,880 400,882C373,884 373,864 400,850Z" /><path fill="#4a3824" stroke="#4a3824" stroke-width="7" d="M300,828C306,814 340,803 350,812C360,821 368,866 362,880C356,894 322,907 312,898C302,889 294,842 300,828Z" /><path fill="#1c1917" stroke="#1c1917" stroke-width="7" d="M140,920C132,911 132,899 135,890C138,881 146,871 160,865C174,859 205,849 220,855C235,861 247,886 250,900C253,914 252,932 240,940C228,948 197,948 180,945C163,942 148,929 140,920Z" /><path fill="#4a3828" stroke="#4a3828" stroke-width="7" d="M700,680C710,672 745,672 760,675C775,678 788,690 790,700C792,710 785,727 775,735C765,743 742,752 730,750C718,748 705,732 700,720C695,708 690,688 700,680Z" /><path fill="#e8dcc0" stroke="#e8dcc0" stroke-width="7" d="M735,696C738,693 752,695 756,698C760,701 759,713 756,716C753,719 740,717 736,714C732,711 732,699 735,696Z" /><path fill="none" stroke="#e9c7b0" stroke-width="9" stroke-linecap="round" d="M730,662L822,646" /></g></g></g></svg></div>
<div class="cell" style="left:1157px;top:538px;height:183px;background:#b6c5e3"><svg viewBox="0 0 1505 1011" preserveAspectRatio="none"><g stroke-linejoin="round"><g filter="url(#b1)"><g transform="translate(730.6,54.9) scale(0.3358)"><path fill="none" stroke="#2d2925" stroke-width="16" stroke-linecap="round" d="M640,300L560,255M660,280L575,212M700,270L605,198" /><path fill="#2d2925" stroke="#2d2925" stroke-width="7" d="M710,830C684,805 703,745 705,700C707,655 719,602 720,560C721,518 720,483 710,450C700,417 678,387 660,360C642,333 615,310 600,290C585,270 570,253 570,240C570,227 585,212 600,210C615,208 633,215 660,225C687,235 727,249 760,270C793,291 828,323 860,350C892,377 925,405 950,430C975,455 994,478 1010,500C1026,522 1041,540 1045,560C1049,580 1042,600 1035,620C1028,640 1008,657 1000,680C992,703 990,735 990,760C990,785 1022,815 1000,830C978,845 908,850 860,850C812,850 736,855 710,830Z" /><path fill="#3a2d26" stroke="#3a2d26" stroke-width="7" d="M720,820C697,785 697,677 720,640C743,603 813,600 860,600C907,600 978,613 1000,640C1022,667 990,728 990,760C990,792 1022,815 1000,830C978,845 907,852 860,850C813,848 743,855 720,820Z" opacity=".8"/><path fill="#3a3028" stroke="#3a3028" stroke-width="7" d="M360,870C368,865 380,854 420,850C460,846 552,848 600,845C648,842 690,828 710,832C730,836 738,862 720,870C702,878 650,878 600,880C550,882 458,882 420,882C382,882 380,884 370,882C360,880 352,875 360,870Z" /><path fill="#4a3428" stroke="#4a3428" stroke-width="7" d="M710,832C735,829 812,850 860,850C908,850 967,832 1000,830C1033,828 1042,835 1060,840C1078,845 1098,852 1110,860C1122,868 1132,878 1130,885C1128,892 1122,897 1100,900C1078,903 1040,904 1000,905C960,906 903,908 860,905C817,902 765,896 740,890C715,884 715,880 710,870C705,860 685,835 710,832Z" /><path fill="#26302c" stroke="#26302c" stroke-width="7" d="M1040,845C1051,840 1095,853 1110,860C1125,867 1132,878 1130,885C1128,892 1109,899 1095,900C1081,901 1054,899 1045,890C1036,881 1029,850 1040,845Z" /><path fill="#e0b080" stroke="#e0b080" stroke-width="7" d="M1012,785C1020,777 1053,773 1062,780C1071,787 1076,820 1068,828C1060,836 1025,837 1016,830C1007,823 1004,793 1012,785Z" /></g></g><g filter="url(#b3)"><g transform="translate(263.7,587.8) scale(0.2007)"><path fill="#211c22" stroke="#211c22" stroke-width="7" d="M250,440C277,432 368,427 420,420C472,413 523,408 560,400C597,392 617,370 640,370C663,370 687,378 700,400C713,422 710,463 720,500C730,537 763,587 760,620C757,653 727,670 700,700C673,730 630,770 600,800C570,830 537,873 520,880C503,887 497,867 500,840C503,813 523,760 540,720C557,680 587,633 600,600C613,567 627,542 620,520C613,498 593,480 560,470C527,460 470,460 420,460C370,460 288,473 260,470C232,467 223,448 250,440Z" /><path fill="#6a6458" stroke="#6a6458" stroke-width="7" d="M700,380C723,365 800,348 850,340C900,332 963,323 1000,330C1037,337 1063,357 1070,380C1077,403 1058,440 1040,470C1022,500 990,532 960,560C930,588 893,617 860,640C827,663 782,713 760,700C738,687 738,605 730,560C722,515 715,460 710,430C705,400 677,395 700,380Z" /></g></g></g></svg></div>
<div class="cell" style="left:57px;top:722px;height:184px;background:linear-gradient(180deg,#b5c5e3,#bbcae6)"><svg viewBox="0 0 1505 1011" preserveAspectRatio="none"><g stroke-linejoin="round"><g filter="url(#b2)"><g transform="translate(428.5,208.7) scale(0.2774)"><path fill="#2e2724" stroke="#2e2724" stroke-width="7" d="M280,280C278,273 287,264 320,255C353,246 423,233 480,225C537,217 627,202 660,205C693,208 707,233 680,245C653,257 558,267 500,275C442,283 367,294 330,295C293,296 282,287 280,280Z" /><path fill="#2a2326" stroke="#2a2326" stroke-width="7" d="M660,170C673,155 727,145 760,150C793,155 837,170 860,200C883,230 910,297 900,330C890,363 833,382 800,400C767,418 733,425 700,440C667,455 628,476 600,490C572,504 544,522 530,525C516,528 507,521 515,505C523,489 559,461 580,430C601,399 623,352 640,320C657,288 677,265 680,240C683,215 647,185 660,170Z" /><path fill="#8a7258" stroke="#8a7258" stroke-width="7" d="M760,150C760,137 827,128 860,120C893,112 927,106 960,105C993,104 1037,109 1060,115C1083,121 1100,128 1100,140C1100,152 1077,170 1060,190C1043,210 1020,237 1000,260C980,283 957,318 940,330C923,342 913,352 900,330C887,308 883,230 860,200C837,170 760,163 760,150Z" /><path fill="none" stroke="#c4a484" stroke-width="14" stroke-linecap="round" d="M1060,150L960,290L900,350" /><path fill="#28222a" stroke="#28222a" stroke-width="7" d="M1060,140C1070,132 1100,142 1120,150C1140,158 1165,174 1180,185C1195,196 1208,207 1210,215C1212,223 1205,232 1190,235C1175,238 1142,236 1120,230C1098,224 1070,215 1060,200C1050,185 1050,148 1060,140Z" /><path fill="#453b36" stroke="#453b36" stroke-width="7" d="M900,350C928,320 973,285 1000,260C1027,235 1040,203 1060,200C1080,197 1102,223 1120,240C1138,257 1158,277 1170,300C1182,323 1188,350 1190,380C1192,410 1188,443 1180,480C1172,517 1157,563 1140,600C1123,637 1103,668 1080,700C1057,732 1030,760 1000,790C970,820 933,853 900,880C867,907 822,936 800,950C778,964 778,970 770,965C762,960 747,948 750,920C753,892 778,840 790,800C802,760 812,720 820,680C828,640 838,600 840,560C842,520 820,475 830,440C840,405 872,380 900,350Z" /><path fill="#1f1f28" stroke="#1f1f28" stroke-width="7" d="M840,700C875,698 990,760 1000,790C1010,820 933,853 900,880C867,907 822,936 800,950C778,964 778,970 770,965C762,960 747,948 750,920C753,892 775,837 790,800C805,763 805,702 840,700Z" opacity=".8"/></g></g><g filter="url(#b3)"><g transform="translate(214.2,604.2) scale(0.1679)"><path fill="#1e1c1e" stroke="#1e1c1e" stroke-width="7" d="M250,420C277,413 368,408 420,400C472,392 517,383 560,370C603,357 637,333 680,320C723,307 773,298 820,290C867,282 923,270 960,270C997,270 1027,268 1040,290C1053,312 1045,365 1040,400C1035,435 1023,470 1010,500C997,530 992,565 960,580C928,595 867,590 820,590C773,590 710,592 680,580C650,568 653,540 640,520C627,500 637,473 600,460C563,447 477,443 420,440C363,437 288,443 260,440C232,437 223,427 250,420Z" /><path fill="#6a7088" stroke="#6a7088" stroke-width="7" d="M1050,280C1052,257 1073,212 1090,200C1107,188 1128,197 1150,210C1172,223 1205,260 1220,280C1235,300 1247,318 1240,330C1233,342 1207,348 1180,350C1153,352 1102,352 1080,340C1058,328 1048,303 1050,280Z" /></g></g></g></svg></div>
<div class="cell" style="left:332px;top:722px;height:184px;background:linear-gradient(180deg,#b2c2e1,#b9c8e5)"><svg viewBox="0 0 1505 1011" preserveAspectRatio="none"><g stroke-linejoin="round"><g filter="url(#b2)"><g transform="translate(285.6,159.3) scale(0.2774)"><path fill="none" stroke="#1e1a22" stroke-width="26" stroke-linecap="round" d="M655,210L625,145M695,205L665,110M745,215L722,110M850,255L828,170" /><path fill="#3b2c20" stroke="#3b2c20" stroke-width="7" d="M640,330C635,298 650,255 650,230C650,205 632,187 640,180C648,173 678,188 700,190C722,192 748,188 770,190C792,192 812,188 830,200C848,212 862,242 880,260C898,278 913,295 940,310C967,325 1027,335 1040,350C1053,365 1017,385 1020,400C1023,415 1080,427 1060,440C1040,453 957,473 900,480C843,487 757,490 720,480C683,470 693,445 680,420C667,395 645,362 640,330Z" /><path fill="#544c30" stroke="#544c30" stroke-width="7" d="M680,240C693,230 747,233 780,240C813,247 857,267 880,280C903,293 933,312 920,320C907,328 837,333 800,330C763,327 720,315 700,300C680,285 667,250 680,240Z" /><path fill="#2c2a26" stroke="#2c2a26" stroke-width="7" d="M275,505C282,500 292,494 330,490C368,486 438,482 500,480C562,478 665,468 700,475C735,482 743,511 710,520C677,529 563,528 500,530C437,532 366,532 330,530C294,528 294,524 285,520C276,516 268,510 275,505Z" /><path fill="#4a3424" stroke="#4a3424" stroke-width="7" d="M700,475C732,467 840,486 900,480C960,474 1023,442 1060,440C1097,438 1102,458 1120,470C1138,482 1159,498 1170,510C1181,522 1190,532 1185,540C1180,548 1161,555 1140,560C1119,565 1100,567 1060,570C1020,573 950,580 900,580C850,580 792,578 760,570C728,562 720,546 710,530C700,514 668,483 700,475Z" /><path fill="#c0a890" stroke="#c0a890" stroke-width="7" d="M1040,430C1052,427 1100,432 1120,440C1140,448 1163,475 1160,480C1157,485 1118,473 1100,470C1082,467 1060,467 1050,460C1040,453 1028,433 1040,430Z" /><path fill="#2a2428" stroke="#2a2428" stroke-width="7" d="M1060,490C1073,482 1129,492 1150,500C1171,508 1188,530 1185,540C1182,550 1149,559 1130,560C1111,561 1082,557 1070,545C1058,533 1047,498 1060,490Z" /><path fill="#2b2220" stroke="#2b2220" stroke-width="7" d="M720,560C740,547 853,573 900,580C947,587 993,588 1000,600C1007,612 957,630 940,650C923,670 903,695 900,720C897,745 915,770 920,800C925,830 932,877 930,900C928,923 918,947 910,940C902,933 892,890 880,860C868,830 857,793 840,760C823,727 800,693 780,660C760,627 700,573 720,560Z" /><path fill="#6d6850" stroke="#6d6850" stroke-width="7" d="M940,650C955,632 973,610 1000,600C1027,590 1075,583 1100,590C1125,597 1138,618 1150,640C1162,662 1168,690 1170,720C1172,750 1167,792 1160,820C1153,848 1147,873 1130,890C1113,907 1085,913 1060,920C1035,927 1002,927 980,930C958,933 938,952 930,940C922,928 932,887 930,860C928,833 923,805 920,780C917,755 907,732 910,710C913,688 925,668 940,650Z" /><path fill="#a06030" stroke="#a06030" stroke-width="7" d="M900,720C902,707 924,707 930,720C936,733 938,787 935,800C932,813 921,813 915,800C909,787 898,733 900,720Z" /><path fill="#22222a" stroke="#22222a" stroke-width="7" d="M910,940C913,932 955,906 980,900C1005,894 1035,908 1060,905C1085,902 1120,878 1130,880C1140,882 1135,909 1120,920C1105,931 1067,940 1040,945C1013,950 982,951 960,950C938,949 907,948 910,940Z" /></g></g><g filter="url(#b3)"><g transform="translate(346.1,565.8) scale(0.1825)"><path fill="#5a6470" stroke="#5a6470" stroke-width="7" d="M520,420C483,423 540,343 560,340C580,337 633,373 640,400C647,427 583,533 600,500C617,467 703,257 740,200C777,143 800,143 820,160C840,177 867,273 860,300C853,327 837,300 780,320C723,340 557,417 520,420Z" /><path fill="#17141a" stroke="#17141a" stroke-width="7" d="M640,820C663,797 643,737 640,700C637,663 633,633 620,600C607,567 577,530 560,500C543,470 523,443 520,420C517,397 523,363 540,360C557,357 593,405 620,400C647,395 680,363 700,330C720,297 720,228 740,200C760,172 793,153 820,160C847,167 873,228 900,240C927,252 953,215 980,230C1007,245 1037,293 1060,330C1083,367 1107,412 1120,450C1133,488 1147,522 1140,560C1133,598 1093,643 1080,680C1067,717 1057,747 1060,780C1063,813 1083,855 1100,880C1117,905 1177,918 1160,930C1143,942 1060,950 1000,950C940,950 860,938 800,930C740,922 690,908 640,900C590,892 560,885 500,880C440,875 317,875 280,870C243,865 243,855 280,850C317,845 440,845 500,840C560,835 617,843 640,820Z" /></g></g></g></svg></div>
<div class="cell" style="left:607px;top:722px;height:184px;background:linear-gradient(168deg,#cccfde 0%,#c5c9dc 50%,#bac1d7 100%)"><svg viewBox="0 0 1505 1011" preserveAspectRatio="none"><g stroke-linejoin="round"><g filter="url(#b2)"><g transform="translate(763.5,357.0) scale(0.2993)"><path fill="#3c3e33" stroke="#3c3e33" stroke-width="7" d="M580,430C572,407 585,360 590,330C595,300 595,275 610,250C625,225 652,202 680,180C708,158 747,137 780,120C813,103 850,90 880,80C910,70 938,64 960,60C982,56 996,52 1010,55C1024,58 1040,69 1045,80C1050,91 1049,107 1040,120C1031,133 1007,143 990,160C973,177 958,197 940,220C922,243 900,272 880,300C860,328 840,362 820,390C800,418 777,448 760,470C743,492 740,520 720,520C700,520 663,485 640,470C617,455 588,453 580,430Z" /><path fill="#454839" stroke="#454839" stroke-width="7" d="M330,640C341,617 358,597 380,580C402,563 433,548 460,540C487,532 513,525 540,530C567,535 600,558 620,570C640,582 663,585 660,600C657,615 620,637 600,660C580,683 560,712 540,740C520,768 497,803 480,830C463,857 450,878 440,900C430,922 428,949 420,960C412,971 400,968 390,965C380,962 368,956 360,945C352,934 347,921 340,900C333,879 324,850 320,820C316,790 313,750 315,720C317,690 319,663 330,640Z" /><path fill="#8e9482" stroke="#8e9482" stroke-width="7" d="M470,470C473,458 485,435 500,430C515,425 537,433 560,440C583,447 613,457 640,470C667,483 703,505 720,520C737,535 743,548 740,560C737,572 720,588 700,590C680,592 647,580 620,570C593,560 563,542 540,530C517,518 492,510 480,500C468,490 467,482 470,470Z" /><path fill="#e3cfb6" stroke="#e3cfb6" stroke-width="7" d="M475,470C477,458 488,432 500,425C512,418 535,424 545,430C555,436 562,450 560,460C558,470 542,484 530,490C518,496 499,498 490,495C481,492 473,482 475,470Z" /><path fill="#c8b9a0" stroke="#c8b9a0" stroke-width="7" d="M720,540C727,533 747,550 760,560C773,570 800,588 800,600C800,612 773,630 760,630C747,630 727,615 720,600C713,585 713,547 720,540Z" /><path fill="#23262a" stroke="#23262a" stroke-width="7" d="M780,590C793,588 817,600 840,610C863,620 900,638 920,650C940,662 957,671 960,680C963,689 953,702 940,705C927,708 900,708 880,700C860,692 840,672 820,660C800,648 767,637 760,625C753,613 767,592 780,590Z" /></g></g></g></svg></div>
<div class="cell" style="left:882px;top:722px;height:184px;background:linear-gradient(105deg,#b9bed2 0%,#b1b7ce 55%,#b4bad0 100%)"><svg viewBox="0 0 1505 1011" preserveAspectRatio="none"><g stroke-linejoin="round"><g filter="url(#b1)"><g transform="translate(593.2,263.7) scale(0.5000)"><path fill="#2f2c24" stroke="#2f2c24" stroke-width="7" d="M600,470C573,450 591,410 590,380C589,350 588,320 595,290C602,260 614,228 630,200C646,172 670,142 690,120C710,98 732,82 750,70C768,58 784,50 800,45C816,40 839,33 845,42C851,51 842,77 835,100C828,123 809,152 800,180C791,208 784,240 780,270C776,300 777,332 775,360C773,388 774,417 770,440C766,463 778,495 750,500C722,505 627,490 600,470Z" /><path fill="#35332a" stroke="#35332a" stroke-width="7" d="M500,640C509,618 523,602 540,590C557,578 577,567 600,565C623,563 660,574 680,580C700,586 717,583 720,600C723,617 710,653 700,680C690,707 673,733 660,760C647,787 629,813 620,840C611,867 608,897 605,920C602,943 605,969 600,980C595,991 584,988 575,985C566,982 556,978 545,960C534,942 519,907 510,880C501,853 494,827 490,800C486,773 483,747 485,720C487,693 491,662 500,640Z" /><path fill="#bdb8a8" stroke="#bdb8a8" stroke-width="7" d="M520,490C522,481 535,478 550,475C565,472 577,466 610,470C643,474 718,490 750,500C782,510 788,520 800,530C812,540 827,552 820,560C813,568 783,577 760,580C737,583 707,583 680,580C653,577 623,568 600,560C577,552 553,542 540,530C527,518 518,499 520,490Z" /><path fill="#e8e0d0" stroke="#e8e0d0" stroke-width="7" d="M670,510C677,501 718,501 740,505C762,509 792,525 800,535C808,545 807,561 790,565C773,569 720,569 700,560C680,551 663,519 670,510Z" /><path fill="#2c3444" stroke="#2c3444" stroke-width="7" d="M520,490C523,482 539,477 550,475C561,473 578,473 585,480C592,487 594,507 590,515C586,523 570,529 560,530C550,531 537,527 530,520C523,513 517,498 520,490Z" /><path fill="#2a2620" stroke="#2a2620" stroke-width="7" d="M790,540C803,535 837,545 860,550C883,555 914,563 930,570C946,577 952,582 955,590C958,598 954,610 945,615C936,620 918,622 900,620C882,618 860,607 840,600C820,593 788,590 780,580C772,570 777,545 790,540Z" /><path fill="#8a5030" stroke="#8a5030" stroke-width="7" d="M790,545C799,540 832,542 840,550C848,558 844,585 835,590C826,595 792,586 785,578C778,570 781,550 790,545Z" /></g></g></g></svg></div>
<div class="cell" style="left:1157px;top:722px;height:184px;background:linear-gradient(200deg,#c0c4d5,#b9bed2 60%)"><svg viewBox="0 0 1505 1011" preserveAspectRatio="none"><g stroke-linejoin="round"><g filter="url(#b2)"><g transform="translate(802.0,329.6) scale(0.2336)"><path fill="#33332b" stroke="#33332b" stroke-width="7" d="M650,600C643,578 652,517 660,480C668,443 680,413 700,380C720,347 750,310 780,280C810,250 847,225 880,200C913,175 950,148 980,130C1010,112 1038,100 1060,90C1082,80 1095,70 1110,70C1125,70 1140,83 1150,90C1160,97 1172,97 1170,110C1168,123 1153,147 1140,170C1127,193 1108,222 1090,250C1072,278 1050,308 1030,340C1010,372 988,407 970,440C952,473 935,507 920,540C905,573 893,610 880,640C867,670 857,720 840,720C823,720 803,658 780,640C757,622 722,617 700,610C678,603 657,622 650,600Z" /><path fill="#5f666a" stroke="#5f666a" stroke-width="7" d="M330,800C333,779 342,757 360,745C378,733 413,732 440,730C467,728 493,731 520,735C547,739 573,748 600,755C627,762 680,762 680,775C680,788 623,812 600,830C577,848 560,863 540,880C520,897 498,920 480,930C462,940 447,942 430,940C413,938 395,932 380,920C365,908 348,890 340,870C332,850 327,821 330,800Z" /><path fill="#d8b088" stroke="#d8b088" stroke-width="7" d="M500,700C507,688 535,672 560,660C585,648 623,637 650,630C677,623 697,617 720,620C743,623 772,633 790,650C808,667 825,702 830,720C835,738 828,750 820,760C812,770 800,778 780,780C760,782 730,775 700,770C670,765 630,757 600,750C570,743 537,738 520,730C503,722 493,712 500,700Z" /><path fill="none" stroke="#5a3020" stroke-width="18" stroke-linecap="round" d="M510,715L640,770L760,790" /><path fill="#2a2628" stroke="#2a2628" stroke-width="7" d="M760,780C765,770 797,762 820,770C843,778 870,808 900,830C930,852 970,880 1000,900C1030,920 1068,936 1080,950C1092,964 1085,979 1075,985C1065,991 1042,992 1020,985C998,978 967,958 940,940C913,922 885,898 860,880C835,862 807,847 790,830C773,813 755,790 760,780Z" /><path fill="none" stroke="#d8c0a8" stroke-width="14" stroke-linecap="round" d="M800,795L830,830M850,835L880,868" /></g></g></g></svg></div>
<div class="cell" style="left:57px;top:907px;height:127px;background:linear-gradient(90deg,#bec2d3,#c8cbda)"><svg viewBox="0 0 1505 1011" preserveAspectRatio="none"><g stroke-linejoin="round"><g filter="url(#b2)"><g transform="translate(697.6,428.5) scale(0.2993)"><path fill="#5e5c58" stroke="#5e5c58" stroke-width="7" d="M200,640C208,613 223,580 240,560C257,540 277,525 300,520C323,515 353,522 380,530C407,538 437,558 460,570C483,582 497,582 520,600C543,618 573,653 600,680C627,707 680,750 680,760C680,770 627,747 600,740C573,733 547,720 520,720C493,720 467,730 440,740C413,750 383,765 360,780C337,795 315,813 300,830C285,847 283,872 270,880C257,888 232,893 220,880C208,867 205,827 200,800C195,773 190,747 190,720C190,693 192,667 200,640Z" /><path fill="#7a6e5c" stroke="#7a6e5c" stroke-width="7" d="M860,200C870,184 923,174 960,165C997,156 1040,146 1080,145C1120,144 1170,155 1200,160C1230,165 1253,163 1260,175C1267,187 1253,212 1240,230C1227,248 1203,262 1180,280C1157,298 1127,320 1100,340C1073,360 1045,378 1020,400C995,422 970,447 950,470C930,493 915,515 900,540C885,565 870,610 860,620C850,630 837,620 840,600C843,580 870,530 880,500C890,470 900,447 900,420C900,393 880,367 880,340C880,313 903,283 900,260C897,237 850,216 860,200Z" /><path fill="#caa878" stroke="#caa878" stroke-width="7" d="M600,520C597,488 640,463 660,430C680,397 703,350 720,320C737,290 737,270 760,250C783,230 827,213 860,200C893,187 953,160 960,170C967,180 913,232 900,260C887,288 880,313 880,340C880,367 900,393 900,420C900,447 888,470 880,500C872,530 858,563 850,600C842,637 845,703 830,720C815,737 785,717 760,700C735,683 707,650 680,620C653,590 603,552 600,520Z" /><path fill="#1c1a1c" stroke="#1c1a1c" stroke-width="7" d="M1240,175C1250,168 1287,176 1300,180C1313,184 1319,188 1320,200C1321,212 1315,242 1305,250C1295,258 1271,254 1260,250C1249,246 1243,238 1240,225C1237,212 1230,182 1240,175Z" /><path fill="#3a2a20" stroke="#3a2a20" stroke-width="7" d="M505,505C506,485 526,471 545,480C564,489 594,532 620,560C646,588 673,617 700,650C727,683 755,723 780,760C805,797 852,850 850,870C848,890 795,892 770,880C745,868 725,830 700,800C675,770 647,733 620,700C593,667 559,632 540,600C521,568 504,525 505,505Z" /><path fill="#d8b078" stroke="#d8b078" stroke-width="7" d="M600,530C607,527 643,557 670,580C697,603 730,638 760,670C790,702 827,737 850,770C873,803 900,852 900,870C900,888 868,892 850,880C832,868 815,832 790,800C765,768 727,723 700,690C673,657 647,627 630,600C613,573 593,533 600,530Z" /></g></g></g></svg></div>
<div class="cell" style="left:332px;top:907px;height:127px;background:linear-gradient(90deg,#bbbfd1,#c2c5d5)"><svg viewBox="0 0 1505 1011" preserveAspectRatio="none"><g stroke-linejoin="round"><g filter="url(#b2)"><g transform="translate(736.1,428.5) scale(0.2993)"><path fill="#2a2620" stroke="#2a2620" stroke-width="7" d="M680,230C680,192 740,188 760,170C780,152 780,127 800,120C820,113 850,120 880,130C910,140 947,163 980,180C1013,197 1047,212 1080,230C1113,248 1150,267 1180,290C1210,313 1257,360 1260,370C1263,380 1227,357 1200,350C1173,343 1133,332 1100,330C1067,328 1033,332 1000,340C967,348 930,367 900,380C870,393 843,417 820,420C797,423 783,432 760,400C737,368 680,268 680,230Z" /><path fill="#4a4a48" stroke="#4a4a48" stroke-width="7" d="M1000,250C1017,237 1067,242 1100,250C1133,258 1173,280 1200,300C1227,320 1263,362 1260,370C1257,378 1210,352 1180,345C1150,338 1110,328 1080,325C1050,322 1013,342 1000,330C987,318 983,263 1000,250Z" /><path fill="#2a2620" stroke="#2a2620" stroke-width="7" d="M250,520C263,487 278,445 300,420C322,395 345,388 380,370C415,352 467,282 510,310C553,338 632,492 640,540C648,588 587,583 560,600C533,617 503,620 480,640C457,660 440,693 420,720C400,747 380,773 360,800C340,827 330,867 300,880C270,893 205,887 180,880C155,873 150,863 150,840C150,817 168,777 180,740C192,703 208,657 220,620C232,583 237,553 250,520Z" /><path fill="#4c4c3c" stroke="#4c4c3c" stroke-width="7" d="M230,600C248,575 272,572 300,570C328,568 372,582 400,590C428,598 467,598 470,620C473,642 438,690 420,720C402,750 380,773 360,800C340,827 328,867 300,880C272,893 213,888 190,880C167,872 160,857 160,830C160,803 178,758 190,720C202,682 212,625 230,600Z" /><path fill="#2a2620" stroke="#2a2620" stroke-width="7" d="M510,300C530,278 532,262 560,250C588,238 647,205 680,230C713,255 737,368 760,400C783,432 817,408 820,420C823,432 800,457 780,470C760,483 723,488 700,500C677,512 670,523 640,540C610,557 557,597 520,600C483,603 443,580 420,560C397,540 377,510 380,480C383,450 418,410 440,380C462,350 490,322 510,300Z" /><path fill="#e6bb80" stroke="#e6bb80" stroke-width="7" d="M520,200C523,187 543,174 560,170C577,166 603,168 620,175C637,182 655,196 660,210C665,224 660,249 650,260C640,271 618,277 600,275C582,273 553,262 540,250C527,238 517,213 520,200Z" /><path fill="#1a1818" stroke="#1a1818" stroke-width="7" d="M500,180C503,172 532,162 540,165C548,168 553,192 550,200C547,208 528,218 520,215C512,212 497,188 500,180Z" /><path fill="#1c1e24" stroke="#1c1e24" stroke-width="7" d="M720,500C723,475 777,463 800,470C823,477 837,512 860,540C883,568 918,610 940,640C962,670 985,698 990,720C995,742 982,761 970,770C958,779 938,783 920,775C902,767 883,746 860,720C837,694 803,657 780,620C757,583 717,525 720,500Z" /><path fill="#e0a050" stroke="#e0a050" stroke-width="7" d="M790,470C793,452 820,438 830,450C840,462 853,522 850,540C847,558 820,572 810,560C800,548 787,488 790,470Z" /></g></g></g></svg></div>
<div class="cell" style="left:607px;top:907px;height:127px;background:linear-gradient(100deg,#eef0f4,#e9ebf1 55%,#dfe2eb)"><svg viewBox="0 0 1505 1011" preserveAspectRatio="none"><g stroke-linejoin="round"><g filter="url(#b1)"><g transform="translate(346.1,318.6) scale(0.5000)"><path fill="none" stroke="#23231c" stroke-width="8" stroke-linecap="round" d="M265,520L340,470M185,615L260,560M180,655L240,610M185,678L260,640" /><path fill="#444632" stroke="#444632" stroke-width="7" d="M180,650C182,638 187,628 200,610C213,592 237,565 260,540C283,515 313,485 340,460C367,435 393,413 420,390C447,367 475,338 500,320C525,302 547,287 570,285C593,283 613,304 640,310C667,316 717,302 730,320C743,338 725,385 720,420C715,455 713,513 700,530C687,547 663,523 640,520C617,517 587,510 560,510C533,510 503,512 480,520C457,528 443,547 420,560C397,573 367,587 340,600C313,613 285,627 260,640C235,653 203,678 190,680C177,682 178,662 180,650Z" /><path fill="#6e6f5e" stroke="#6e6f5e" stroke-width="7" d="M200,610C212,588 237,565 260,540C283,515 313,483 340,460C367,437 398,403 420,400C442,397 465,420 470,440C475,460 465,497 450,520C435,543 405,563 380,580C355,597 323,608 300,620C277,632 259,642 240,650C221,658 192,677 185,670C178,663 188,632 200,610Z" opacity=".8"/><path fill="#f0e8c8" stroke="#f0e8c8" stroke-width="7" d="M250,610C257,600 277,585 290,580C303,575 328,575 330,580C332,585 313,600 300,610C287,620 258,640 250,640C242,640 243,620 250,610Z" /><path fill="#444632" stroke="#444632" stroke-width="7" d="M860,340C877,323 910,348 940,350C970,352 1013,343 1040,350C1067,357 1080,373 1100,390C1120,407 1140,427 1160,450C1180,473 1202,505 1220,530C1238,555 1253,575 1270,600C1287,625 1310,656 1320,680C1330,704 1348,736 1330,747C1312,758 1238,758 1210,747C1182,736 1178,701 1160,680C1142,659 1123,635 1100,620C1077,605 1050,598 1020,590C990,582 953,575 920,570C887,565 833,580 820,560C807,540 833,487 840,450C847,413 843,357 860,340Z" /><path fill="#706f5f" stroke="#706f5f" stroke-width="7" d="M1100,500C1117,483 1140,455 1160,460C1180,465 1202,507 1220,530C1238,553 1253,575 1270,600C1287,625 1310,656 1320,680C1330,704 1348,736 1330,747C1312,758 1238,756 1210,747C1182,738 1177,711 1160,690C1143,669 1127,642 1110,620C1093,598 1062,580 1060,560C1058,540 1083,517 1100,500Z" /><path fill="none" stroke="#26241e" stroke-width="10" stroke-linecap="round" d="M1120,540L1200,520M1150,590L1240,580M1180,650L1280,640M1210,705L1310,700" /><path fill="none" stroke="#b0705a" stroke-width="8" stroke-linecap="round" d="M1250,580L1325,690" /><path fill="#50523c" stroke="#50523c" stroke-width="7" d="M730,320C737,295 748,282 760,270C772,258 787,248 800,245C813,242 830,244 840,250C850,256 857,265 860,280C863,295 863,317 860,340C857,363 848,393 840,420C832,447 818,473 810,500C802,527 795,553 790,580C785,607 783,632 780,660C777,688 788,732 770,747C752,762 683,765 670,747C657,729 685,676 690,640C695,604 695,567 700,530C705,493 715,455 720,420C725,385 723,345 730,320Z" /><path fill="#3a3c2a" stroke="#3a3c2a" stroke-width="7" d="M700,600C717,588 777,580 790,590C803,600 783,634 780,660C777,686 788,732 770,747C752,762 683,762 670,747C657,732 685,684 690,660C695,636 683,612 700,600Z" /><path fill="#8a6a4c" stroke="#8a6a4c" stroke-width="7" d="M742,618C744,610 753,606 756,612C759,618 762,644 760,652C758,660 749,664 746,658C743,652 740,626 742,618Z" opacity=".8"/><path fill="#e6e0cc" stroke="#e6e0cc" stroke-width="7" d="M845,280C850,275 864,282 870,290C876,298 882,320 880,330C878,340 862,352 855,350C848,348 842,332 840,320C838,308 840,285 845,280Z" /></g></g></g></svg></div>
<div class="cell" style="left:882px;top:907px;height:127px;background:linear-gradient(100deg,#f0f1f5,#eaecf2 60%,#e4e7ee)"><svg viewBox="0 0 1505 1011" preserveAspectRatio="none"><g stroke-linejoin="round"><g filter="url(#b1)"><g transform="translate(346.1,291.1) scale(0.5000)"><path fill="#4d4c38" stroke="#4d4c38" stroke-width="7" d="M180,640C183,617 202,575 220,540C238,505 263,465 290,430C317,395 352,360 380,330C408,300 437,269 460,250C483,231 505,220 520,215C535,210 537,211 550,220C563,229 578,258 600,270C622,282 660,285 680,290C700,295 717,278 720,300C723,322 707,383 700,420C693,457 697,507 680,520C663,533 627,508 600,500C573,492 545,476 520,470C495,464 470,462 450,465C430,468 420,478 400,490C380,502 353,522 330,540C307,558 282,577 260,600C238,623 213,673 200,680C187,687 177,663 180,640Z" /><path fill="#e8d8b8" stroke="#e8d8b8" stroke-width="7" d="M240,530C250,517 280,505 300,500C320,495 355,490 360,500C365,510 343,543 330,560C317,577 295,597 280,600C265,603 247,592 240,580C233,568 230,543 240,530Z" /><path fill="#20201c" stroke="#20201c" stroke-width="7" d="M180,640C182,620 203,568 215,560C227,552 242,580 250,590C258,600 268,605 260,620C252,635 213,677 200,680C187,683 178,660 180,640Z" /><path fill="none" stroke="#b0a888" stroke-width="8" stroke-linecap="round" d="M470,248L545,222" /><path fill="#4e4d38" stroke="#4e4d38" stroke-width="7" d="M825,330C839,310 878,326 900,320C922,314 942,301 960,295C978,289 995,281 1010,285C1025,289 1035,301 1050,320C1065,339 1083,373 1100,400C1117,427 1135,453 1150,480C1165,507 1179,532 1190,560C1201,588 1209,618 1215,650C1221,682 1224,725 1225,750C1226,775 1232,793 1220,802C1208,811 1167,816 1150,802C1133,788 1132,747 1120,720C1108,693 1095,665 1080,640C1065,615 1050,587 1030,570C1010,553 985,545 960,540C935,535 908,539 880,540C852,541 801,562 790,545C779,528 809,476 815,440C821,404 811,350 825,330Z" /><path fill="#726a54" stroke="#726a54" stroke-width="7" d="M1060,420C1075,403 1085,390 1100,400C1115,410 1135,453 1150,480C1165,507 1179,532 1190,560C1201,588 1209,618 1215,650C1221,682 1224,725 1225,750C1226,775 1232,793 1220,802C1208,811 1167,816 1150,802C1133,788 1132,747 1120,720C1108,693 1093,665 1080,640C1067,615 1052,593 1040,570C1028,547 1007,525 1010,500C1013,475 1045,437 1060,420Z" /><path fill="none" stroke="#2a281e" stroke-width="9" stroke-linecap="round" d="M1040,520L1140,480M1070,580L1175,545M1095,640L1200,610M1120,700L1215,680M1140,760L1222,745" /><path fill="none" stroke="#b07a50" stroke-width="10" stroke-linecap="round" d="M1188,550L1216,660L1222,790" /><path fill="#5c5c44" stroke="#5c5c44" stroke-width="7" d="M720,300C727,272 730,262 740,250C750,238 768,227 780,225C792,223 808,229 815,240C822,251 824,267 825,290C826,313 824,350 820,380C816,410 808,443 800,470C792,497 780,515 770,540C760,565 750,590 740,620C730,650 718,690 710,720C702,750 706,788 690,802C674,816 625,819 615,802C605,785 624,734 630,700C636,666 643,630 650,600C657,570 662,550 670,520C678,490 692,457 700,420C708,383 713,328 720,300Z" /><path fill="#3c3a28" stroke="#3c3a28" stroke-width="7" d="M650,600C668,587 730,600 740,620C750,640 718,690 710,720C702,750 706,788 690,802C674,816 625,819 615,802C605,785 624,734 630,700C636,666 632,613 650,600Z" /><path fill="#b08a60" stroke="#b08a60" stroke-width="7" d="M704,604C709,596 727,591 730,596C733,601 727,628 722,636C717,644 703,649 700,644C697,639 699,612 704,604Z" opacity=".8"/><path fill="#2a2c3a" stroke="#2a2c3a" stroke-width="7" d="M735,255C738,247 767,228 780,225C793,222 808,232 812,240C816,248 814,264 805,270C796,276 772,278 760,275C748,272 732,263 735,255Z" /></g></g></g></svg></div>
<div class="cell" style="left:1157px;top:907px;height:127px;background:linear-gradient(200deg,#eaecf2,#e5e7ef)"><svg viewBox="0 0 1505 1011" preserveAspectRatio="none"><g stroke-linejoin="round"><g filter="url(#b1)"><g transform="translate(236.2,236.2) scale(0.5985)"><path fill="none" stroke="#22222a" stroke-width="9" stroke-linecap="round" d="M115,345L200,330M125,365L210,350M230,290L290,315M140,315L210,318" /><path fill="#4f4f3a" stroke="#4f4f3a" stroke-width="7" d="M130,350C127,339 143,328 160,320C177,312 207,302 230,300C253,298 272,306 300,310C328,314 363,318 400,325C437,332 487,341 520,350C553,359 573,368 600,380C627,392 653,408 680,420C707,432 750,430 760,450C770,470 747,511 740,540C733,569 733,615 720,625C707,635 683,611 660,600C637,589 610,575 580,560C550,545 513,527 480,510C447,493 413,475 380,460C347,445 313,432 280,420C247,408 205,397 180,385C155,373 133,361 130,350Z" /><path fill="none" stroke="#2d2c20" stroke-width="8" stroke-linecap="round" d="M330,330L300,400M400,345L380,440M470,365L450,480M540,385L530,520M610,410L610,560" /><path fill="#a0583a" stroke="#a0583a" stroke-width="7" d="M490,480C494,476 516,480 525,488C534,496 546,523 545,530C544,537 528,533 520,530C512,527 503,518 498,510C493,502 486,484 490,480Z" opacity=".8"/><path fill="#50503a" stroke="#50503a" stroke-width="5" d="M870,470L960,450L1060,435L1160,445L1260,465L1340,480L1380,490L1330,500L1400,515L1430,535L1380,545L1420,570L1360,575L1280,585L1180,600L1060,615L940,630L840,630L860,540Z" /><path fill="none" stroke="#2e2d20" stroke-width="7" stroke-linecap="round" d="M900,560L1300,520M900,590L1340,550M950,470L1350,500" /><path fill="#7e8068" stroke="#7e8068" stroke-width="7" d="M760,450C768,432 778,422 790,415C802,408 818,402 830,405C842,408 853,418 860,430C867,442 870,458 870,480C870,502 867,533 860,560C853,587 840,617 830,640C820,663 808,680 800,700C792,720 797,752 780,762C763,772 711,776 700,762C689,748 711,707 715,680C719,653 721,627 725,600C729,573 734,545 740,520C746,495 752,468 760,450Z" /><path fill="#5a5c58" stroke="#5a5c58" stroke-width="7" d="M785,420C790,411 818,403 830,405C842,407 857,421 860,430C863,439 860,455 850,460C840,465 811,467 800,460C789,453 780,429 785,420Z" /><path fill="none" stroke="#ece0c0" stroke-width="14" stroke-linecap="round" d="M855,500L830,600L795,690" /><path fill="#a05a3c" stroke="#a05a3c" stroke-width="7" d="M735,700C746,690 770,690 775,700C780,710 778,752 768,762C758,772 718,772 712,762C706,752 724,710 735,700Z" /><path fill="#3a2c24" stroke="#3a2c24" stroke-width="7" d="M700,762C697,752 708,710 715,700C722,690 742,690 745,700C748,710 742,752 735,762C728,772 703,772 700,762Z" /></g></g></g></svg></div>

<!-- scrollbar -->
<div class="a" style="left:1434px;top:90px;width:15px;height:943px;background:#fafafa;border-left:1px solid #eeeeee"></div>
<div class="a" style="left:1438.100px;top:93px;width:7.700px;height:469px;border-radius:4px;background:#c2c2c2"></div>

</div></div>
</body>
</html>
